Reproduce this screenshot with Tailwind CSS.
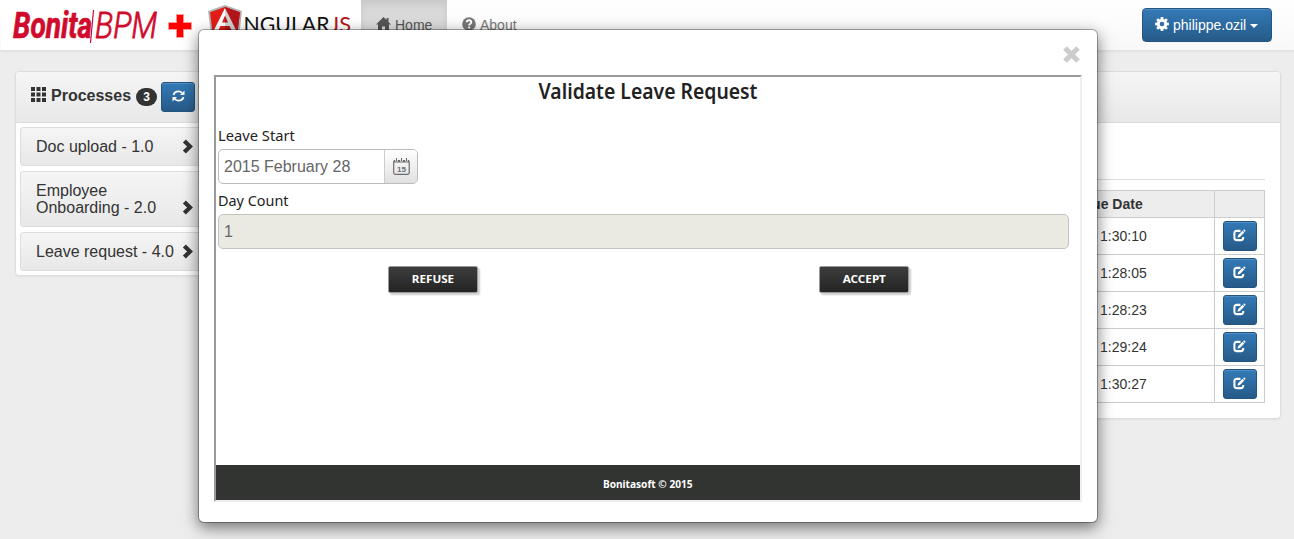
<!DOCTYPE html>
<html lang="en">
<head>
<meta charset="utf-8">
<title>Bonita BPM + AngularJS</title>
<script src="https://cdn.jsdelivr.net/npm/@tailwindcss/browser@4"></script>
</head>
<body class="h-[539px] w-[1294px] overflow-hidden bg-[#ededed] font-['Liberation_Sans',sans-serif] text-[14px] text-[#333]">
<svg class="hidden">
  <symbol id="edit" viewBox="0 0 14 14"><path d="M8 2H4Q1.500 2 1.500 4.500V9.500Q1.500 12 4 12H8.500Q11 12 11 9.500V8.500" fill="none" stroke="#fff" stroke-width="2.200"/><path d="M4.800 9.300L5.500 6.600L10.200 1.900L12.200 3.900L7.500 8.600ZM10.900 1.300L11.700.6Q12.200.3 12.700.8L13.300 1.400Q13.700 1.900 13.300 2.400L12.700 3.100Z" fill="#fff"/></symbol>
  <symbol id="chev" viewBox="0 0 12 16"><path d="M.5 3.700L3.700.5L11.300 8L3.700 15.500L.5 12.300L5 8Z" fill="#333"/></symbol>
</svg>
<header class="flex h-[51px] items-start border-b border-[#e2e2e2] bg-gradient-to-b from-white to-[#f8f8f8] shadow-[0_1px_2px_rgba(0,0,0,0.06)]">
  <svg class="h-[50px] w-[361px] shrink-0" viewBox="0 0 361 50">
    <path d="M1 0h360v50H1z" fill="#fff"/>
    <g fill="#d00a2c" stroke="#d00a2c" font-family="Roboto" font-style="italic">
      <text x="13" y="38" font-size="36" font-weight="700" stroke-width=".7" textLength="79" lengthAdjust="spacingAndGlyphs">Bonita</text>
      <text x="95" y="38" font-size="36" font-weight="300" stroke-width=".8" textLength="62" lengthAdjust="spacingAndGlyphs">BPM</text>
    </g>
    <path d="M93.500 10L90.500 43" stroke="#d00a2c" stroke-width="1.200"/>
    <path d="M176.500 14.500h7v8h8v7h-8v8h-7v-8h-8v-7h8z" fill="#f00" stroke="#f99" stroke-width="1"/>
    <path d="M225 5L242 11L239.500 33L225 41L211 33L208 11Z" fill="#b3b3b3"/>
    <path d="M225 7L240 12.200L237.500 32L225 39L212.500 32L210 12.200Z" fill="#e11c18"/>
    <path d="M225 7L240 12.200L237.500 32L225 39Z" fill="#b3141a"/>
    <path d="M225 8L213.500 31H218L220.500 26H225V22.500H222L225 15.500Z" fill="#fff"/>
    <path d="M225 8L236.500 31H232L229.500 26H225V22.500H228L225 15.500Z" fill="#d0d0d0"/>
    <text x="243.500" y="32" font-family="Lato" font-size="21" font-weight="400" fill="#111" textLength="86" lengthAdjust="spacingAndGlyphs">NGULAR</text>
    <text x="330" y="32" font-family="Lato" font-size="21" fill="#b3141a" textLength="21" lengthAdjust="spacingAndGlyphs">JS</text>
  </svg>
  <nav class="flex h-[50px] text-[#666]">
    <a class="flex w-[86px] gap-[4px] bg-gradient-to-b from-[#d6d6d6] to-[#e1e1e1] pl-[15px] pt-[17px] leading-4 shadow-[inset_0_3px_9px_rgba(0,0,0,0.075)]">
      <svg class="h-[14px] w-[15px] text-[#555]" viewBox="0 0 15 14"><path d="M7.500 0L15 7.500H13V14H9V9.500H6V14H2V7.500H0ZM10.500 1H12.500V5H10.500Z" fill="currentColor"/></svg><span class="text-[#555]">Home</span></a>
    <a class="flex gap-[4px] pl-[15px] pt-[17px] leading-4">
      <svg class="h-[14px] w-[14px]" viewBox="0 0 14 14"><circle cx="7" cy="7" r="6.800" fill="#777"/><path d="M4.800 5.300Q4.800 3.200 7 3.200T9.300 5.200Q9.300 6.200 8 7Q7.100 7.500 7.100 8.600" fill="none" stroke="#fff" stroke-width="1.900"/><path d="M6.100 9.500h2v2h-2z" fill="#fff"/></svg><span class="text-[#777]">About</span></a>
  </nav>
  <button class="ml-auto mr-[22px] mt-[8px] flex h-[34px] w-[130px] items-center rounded-[4px] border border-[#245580] bg-gradient-to-b from-[#337ab7] to-[#265a88] pl-[12px] text-white shadow-[inset_0_1px_0_rgba(255,255,255,0.15)]">
    <svg class="mt-[-2px] h-[14px] w-[14px]" viewBox="-7 -7 14 14"><g fill="#fff"><path d="M-1.400-6.900h2.800v13.800h-2.800z"/><path d="M-1.400-6.900h2.800v13.800h-2.800z" transform="rotate(45)"/><path d="M-1.400-6.900h2.800v13.800h-2.800z" transform="rotate(90)"/><path d="M-1.400-6.900h2.800v13.800h-2.800z" transform="rotate(135)"/><circle r="5.200"/></g><circle r="2.300" fill="#2f70a8"/></svg>
    <span class="ml-[4px]">philippe.ozil</span>
    <span class="ml-[4px] mt-[2px] border-x-4 border-t-4 border-x-transparent border-t-white"></span>
  </button>
</header>
<main class="flex items-start gap-[15px] pl-[15px] pt-[20px]">
  <section class="h-[205px] w-[200px] rounded-[4px] border border-[#ddd] bg-white shadow-[0_1px_2px_rgba(0,0,0,0.05)]">
    <div class="flex h-[51px] items-center rounded-t-[3px] border-b border-[#ddd] bg-gradient-to-b from-[#f5f5f5] to-[#e8e8e8] pl-[15px]">
      <svg class="mt-[-5px] h-[15px] w-[15px]" viewBox="0 0 15 15"><path d="M0 0h4v4H0zM5.500 0h4v4h-4zM11 0h4v4h-4zM0 5.500h4v4H0zM5.500 5.500h4v4h-4zM11 5.500h4v4h-4zM0 11h4v4H0zM5.500 11h4v4h-4zM11 11h4v4h-4z" fill="#333"/></svg>
      <b class="ml-[5px] mt-[-3px] text-[16px]">Processes</b>
      <span class="ml-[5px] flex h-[18px] w-[21px] items-center justify-center rounded-[10px] bg-[#333] text-[12px] font-bold text-white">3</span>
      <span class="ml-[4px] flex h-[30px] w-[34px] items-center justify-center rounded-[3px] border border-[#245580] bg-gradient-to-b from-[#337ab7] to-[#265a88] pb-[2px] shadow-[inset_0_1px_0_rgba(255,255,255,0.15)]">
        <svg class="h-[12px] w-[13px]" viewBox="0 0 13 12"><path d="M1.500 5Q2.500 1.300 6.500 1.300Q8.600 1.300 10.200 3M11.500 7Q10.500 10.700 6.500 10.700Q4.400 10.700 2.800 9" fill="none" stroke="#fff" stroke-width="1.800"/><path d="M12.500.5V5H8ZM.5 11.500V7H5Z" fill="#fff"/></svg></span>
    </div>
    <div class="flex flex-col gap-[5px] p-[4px] text-[16px] leading-[17.600px]">
      <div class="flex h-[39px] items-center justify-between rounded-[3px] border border-[#ddd] bg-gradient-to-b from-[#f5f5f5] to-[#e8e8e8] pl-[15px] pr-[15px]"><span>Doc upload - 1.0</span><svg class="h-[15px] w-[12px]"><use href="#chev"/></svg></div>
      <div class="flex h-[56px] items-end justify-between rounded-[3px] border border-[#ddd] bg-gradient-to-b from-[#f5f5f5] to-[#e8e8e8] pb-[9px] pl-[15px] pr-[15px]"><span>Employee<br>Onboarding - 2.0</span><svg class="mb-[2px] h-[15px] w-[12px]"><use href="#chev"/></svg></div>
      <div class="flex h-[39px] items-center justify-between rounded-[3px] border border-[#ddd] bg-gradient-to-b from-[#f5f5f5] to-[#e8e8e8] pl-[15px] pr-[15px]"><span>Leave request - 4.0</span><svg class="h-[15px] w-[12px]"><use href="#chev"/></svg></div>
    </div>
  </section>
  <section class="h-[348px] w-[1051px] rounded-[4px] border border-[#ddd] bg-white shadow-[0_1px_2px_rgba(0,0,0,0.05)]">
    <div class="h-[51px] rounded-t-[3px] border-b border-[#ddd] bg-gradient-to-b from-[#f5f5f5] to-[#e8e8e8]"></div>
    <hr class="mx-[15px] mt-[56px] border-[#ddd]">
    <table class="ml-auto mr-[15px] mt-[10px] w-[225px] table-fixed border-collapse">
      <colgroup><col class="w-[174px]"><col class="w-[50px]"></colgroup>
      <tbody>
      <tr class="h-[27px] bg-[#ededed]"><th class="border border-[#ccc] p-0 pl-[41px] text-left leading-4">Due Date</th><th class="border border-[#ccc] p-0"></th></tr>
      <tr class="h-[37px]"><td class="border border-[#ccc] p-0 pl-[59px]">1:30:10</td><td class="border border-[#ccc] p-0 pl-[8px]"><span class="flex h-[30px] w-[34px] items-center justify-center rounded-[3px] border border-[#245580] bg-gradient-to-b from-[#337ab7] to-[#265a88] pb-[2px] pr-px shadow-[inset_0_1px_0_rgba(255,255,255,0.15)]"><svg class="h-[13px] w-[13px]"><use href="#edit"/></svg></span></td></tr>
      <tr class="h-[37px]"><td class="border border-[#ccc] p-0 pl-[59px]">1:28:05</td><td class="border border-[#ccc] p-0 pl-[8px]"><span class="flex h-[30px] w-[34px] items-center justify-center rounded-[3px] border border-[#245580] bg-gradient-to-b from-[#337ab7] to-[#265a88] pb-[2px] pr-px shadow-[inset_0_1px_0_rgba(255,255,255,0.15)]"><svg class="h-[13px] w-[13px]"><use href="#edit"/></svg></span></td></tr>
      <tr class="h-[37px]"><td class="border border-[#ccc] p-0 pl-[59px]">1:28:23</td><td class="border border-[#ccc] p-0 pl-[8px]"><span class="flex h-[30px] w-[34px] items-center justify-center rounded-[3px] border border-[#245580] bg-gradient-to-b from-[#337ab7] to-[#265a88] pb-[2px] pr-px shadow-[inset_0_1px_0_rgba(255,255,255,0.15)]"><svg class="h-[13px] w-[13px]"><use href="#edit"/></svg></span></td></tr>
      <tr class="h-[37px]"><td class="border border-[#ccc] p-0 pl-[59px]">1:29:24</td><td class="border border-[#ccc] p-0 pl-[8px]"><span class="flex h-[30px] w-[34px] items-center justify-center rounded-[3px] border border-[#245580] bg-gradient-to-b from-[#337ab7] to-[#265a88] pb-[2px] pr-px shadow-[inset_0_1px_0_rgba(255,255,255,0.15)]"><svg class="h-[13px] w-[13px]"><use href="#edit"/></svg></span></td></tr>
      <tr class="h-[37px]"><td class="border border-[#ccc] p-0 pl-[59px]">1:30:27</td><td class="border border-[#ccc] p-0 pl-[8px]"><span class="flex h-[30px] w-[34px] items-center justify-center rounded-[3px] border border-[#245580] bg-gradient-to-b from-[#337ab7] to-[#265a88] pb-[2px] pr-px shadow-[inset_0_1px_0_rgba(255,255,255,0.15)]"><svg class="h-[13px] w-[13px]"><use href="#edit"/></svg></span></td></tr>
      </tbody>
    </table>
  </section>
</main>
<div class="absolute left-[198px] top-[29px] flex h-[494px] w-[900px] flex-col rounded-[6px] border border-black/30 bg-white bg-clip-padding px-[15px] shadow-[0_5px_15px_rgba(0,0,0,0.5)]">
  <div class="flex h-[45px] items-start justify-end pr-[2px] pt-[16px]"><svg class="h-[17px] w-[17px]" viewBox="0 0 17 17"><path d="M2 2L15 15M15 2L2 15" stroke="#ccc" stroke-width="5.200"/></svg></div>
  <div class="flex h-[427px] w-[868px] flex-col border-2 border-b-[#eee] border-l-[#9a9a9a] border-r-[#eee] border-t-[#9a9a9a] font-['Noto_Sans',sans-serif] text-[#222]">
    <h1 class="flex h-[47px] origin-center scale-x-[0.922] justify-center text-[21px] font-semibold leading-[28px] whitespace-nowrap">Validate Leave Request</h1>
    <div class="flex flex-col px-[2px]">
      <label class="h-[25px] origin-left scale-x-[0.980] text-[15px] leading-[22px]">Leave Start</label>
      <div class="flex h-[35px] w-[200px] overflow-hidden rounded-[5px] border border-[#bbb] font-['Liberation_Sans',sans-serif] text-[16px] text-[#666]">
        <span class="w-[165px] pl-[5px] leading-[33px]">2015 February 28</span>
        <span class="flex flex-1 items-center justify-center border-l border-[#ccc] bg-gradient-to-b from-white to-[#e0e0e0] pb-px">
          <svg class="h-[17px] w-[17px]" viewBox="0 0 17 17"><rect x=".7" y="2.500" width="15.500" height="13.800" rx="1.500" fill="none" stroke="#6b6b70" stroke-width="1.200"/><path d="M1 2h15v2.500H1z" fill="#6b6b70"/><path d="M3.500 0v3.500M8.500 0v3.500M13.500 0v3.500" stroke="#f4f4f4" stroke-width="2.600"/><path d="M3.500 0v3M8.500 0v3M13.500 0v3" stroke="#6b6b70"/><text x="8.500" y="13.600" text-anchor="middle" font-family="Liberation Sans" font-weight="bold" font-size="8" fill="#6b6b70">15</text></svg>
        </span>
      </div>
      <label class="mt-[5px] h-[25px] origin-left scale-x-[0.960] text-[15px] leading-[22px]">Day Count</label>
      <div class="h-[35px] w-[851px] rounded-[5px] border border-[#c3c3c0] bg-[#eaeae2] pl-[5px] font-['Liberation_Sans',sans-serif] text-[16px] leading-[33px] text-[#666]">1</div>
    </div>
    <div class="mt-[17px] flex gap-[341px] pl-[172px] text-[11px] font-bold text-white">
      <button class="flex h-[27px] w-[90px] items-center justify-center rounded-[2px] border border-[#999] bg-gradient-to-b from-[#3d3d3d] to-[#242424] shadow-[2px_2px_2px_rgba(0,0,0,0.2)]"><span class="scale-x-[1.060]">REFUSE</span></button>
      <button class="flex h-[27px] w-[90px] items-center justify-center rounded-[2px] border border-[#999] bg-gradient-to-b from-[#3d3d3d] to-[#242424] shadow-[2px_2px_2px_rgba(0,0,0,0.2)]"><span class="scale-x-[1.060]">ACCEPT</span></button>
    </div>
    <div class="mt-auto flex h-[35px] items-center justify-center bg-[#323432] text-[11px] font-bold text-white"><span class="scale-x-[0.920] pt-[4px]">Bonitasoft © 2015</span></div>
  </div>
</div>
</body>
</html>
